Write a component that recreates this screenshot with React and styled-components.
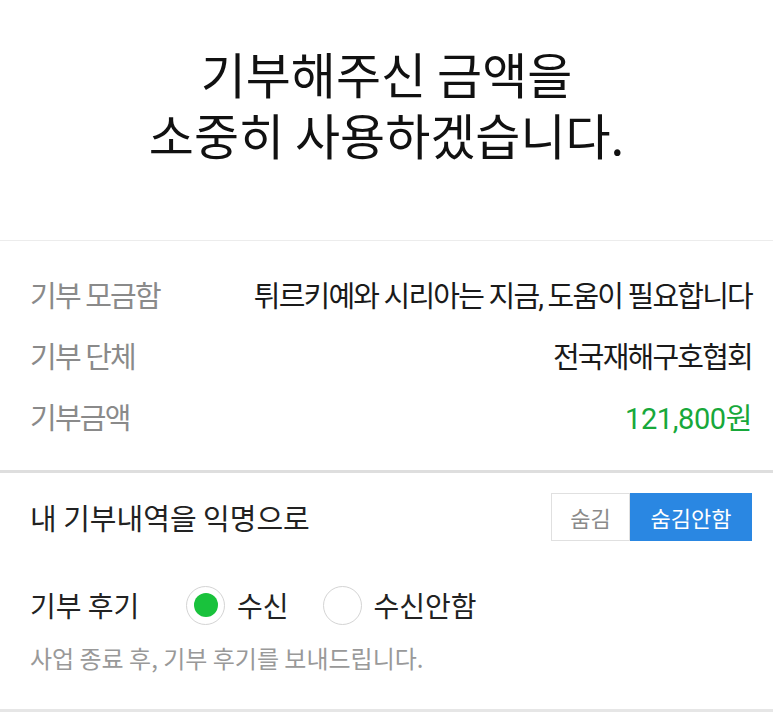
import styled, { createGlobalStyle } from "styled-components";

const GlobalStyle = createGlobalStyle`
  body {
    margin: 0;
    background: #fff;
    font-family: "Noto Sans CJK KR", "Noto Sans", sans-serif;
    color: #222;
  }
  * { box-sizing: border-box; }
`;

const Page = styled.div`
  width: 773px;
  height: 712px;
  overflow: hidden;
`;

const Title = styled.h1`
  margin: 0;
  padding: 42px 0 0;
  height: 241px;
  text-align: center;
  font-size: 49px;
  line-height: 61px;
  font-weight: 400;
  color: #111;
  border-bottom: 1px solid #ececec;
`;

const Details = styled.section`
  height: 232px;
  padding: 22px 21px 0 30px;
  display: flex;
  flex-direction: column;
  border-bottom: 3px solid #dedede;
`;

const DetailRow = styled.div`
  display: flex;
  justify-content: space-between;
  align-items: center;
  height: 61px;
  font-family: Roboto, "Noto Sans CJK KR", sans-serif;
  font-size: 29px;
  letter-spacing: -1.8px;
`;

const Label = styled.span`
  color: #8a8a8a;
`;

const Value = styled.span`
  color: ${(p) => (p.$accent ? "#17a83a" : "#1a1a1a")};
  letter-spacing: ${(p) => (p.$accent ? "-0.4px" : "inherit")};
`;

const Options = styled.section`
  padding: 20px 21px 0 30px;
  height: 239px;
  border-bottom: 3px solid #e6e6e6;
`;

const OptionRow = styled.div`
  display: flex;
  align-items: center;
  justify-content: space-between;
  height: 48px;
  font-size: 29px;
`;

const Toggle = styled.div`
  display: flex;
  height: 48px;
`;

const ToggleButton = styled.button`
  font-family: inherit;
  font-size: 22px;
  width: ${(p) => (p.$active ? "122px" : "79px")};
  padding: 0;
  border: 1px solid ${(p) => (p.$active ? "#2a87e2" : "#e0e0e0")};
  background: ${(p) => (p.$active ? "#2a87e2" : "#fff")};
  color: ${(p) => (p.$active ? "#fff" : "#8a8a8a")};
  cursor: pointer;
`;

const ReviewRow = styled.div`
  display: flex;
  align-items: center;
  margin-top: 39px;
  height: 50px;
  font-size: 28px;
`;

const ReviewLabel = styled.span`
  width: 156px;
`;

const RadioOption = styled.label`
  display: flex;
  align-items: center;
  gap: 12px;
  margin-right: 34px;
  cursor: pointer;
`;

const RadioCircle = styled.span`
  width: 39px;
  height: 39px;
  border-radius: 50%;
  border: 1.5px solid #d4d4d4;
  display: flex;
  align-items: center;
  justify-content: center;
  &::after {
    content: "";
    width: 24px;
    height: 24px;
    border-radius: 50%;
    background: ${(p) => (p.$checked ? "#19c23c" : "transparent")};
  }
`;

const Note = styled.p`
  margin: 12px 0 0;
  font-size: 24px;
  line-height: 32px;
  color: #999;
`;

export default function App() {
  return (
    <Page>
      <GlobalStyle />
      <Title>
        기부해주신 금액을
        <br />
        소중히 사용하겠습니다.
      </Title>
      <Details>
        <DetailRow>
          <Label>기부 모금함</Label>
          <Value>튀르키예와 시리아는 지금, 도움이 필요합니다</Value>
        </DetailRow>
        <DetailRow>
          <Label>기부 단체</Label>
          <Value>전국재해구호협회</Value>
        </DetailRow>
        <DetailRow>
          <Label>기부금액</Label>
          <Value $accent>121,800원</Value>
        </DetailRow>
      </Details>
      <Options>
        <OptionRow>
          <span>내 기부내역을 익명으로</span>
          <Toggle>
            <ToggleButton>숨김</ToggleButton>
            <ToggleButton $active>숨김안함</ToggleButton>
          </Toggle>
        </OptionRow>
        <ReviewRow>
          <ReviewLabel>기부 후기</ReviewLabel>
          <RadioOption>
            <RadioCircle $checked />
            수신
          </RadioOption>
          <RadioOption>
            <RadioCircle />
            수신안함
          </RadioOption>
        </ReviewRow>
        <Note>사업 종료 후, 기부 후기를 보내드립니다.</Note>
      </Options>
    </Page>
  );
}
